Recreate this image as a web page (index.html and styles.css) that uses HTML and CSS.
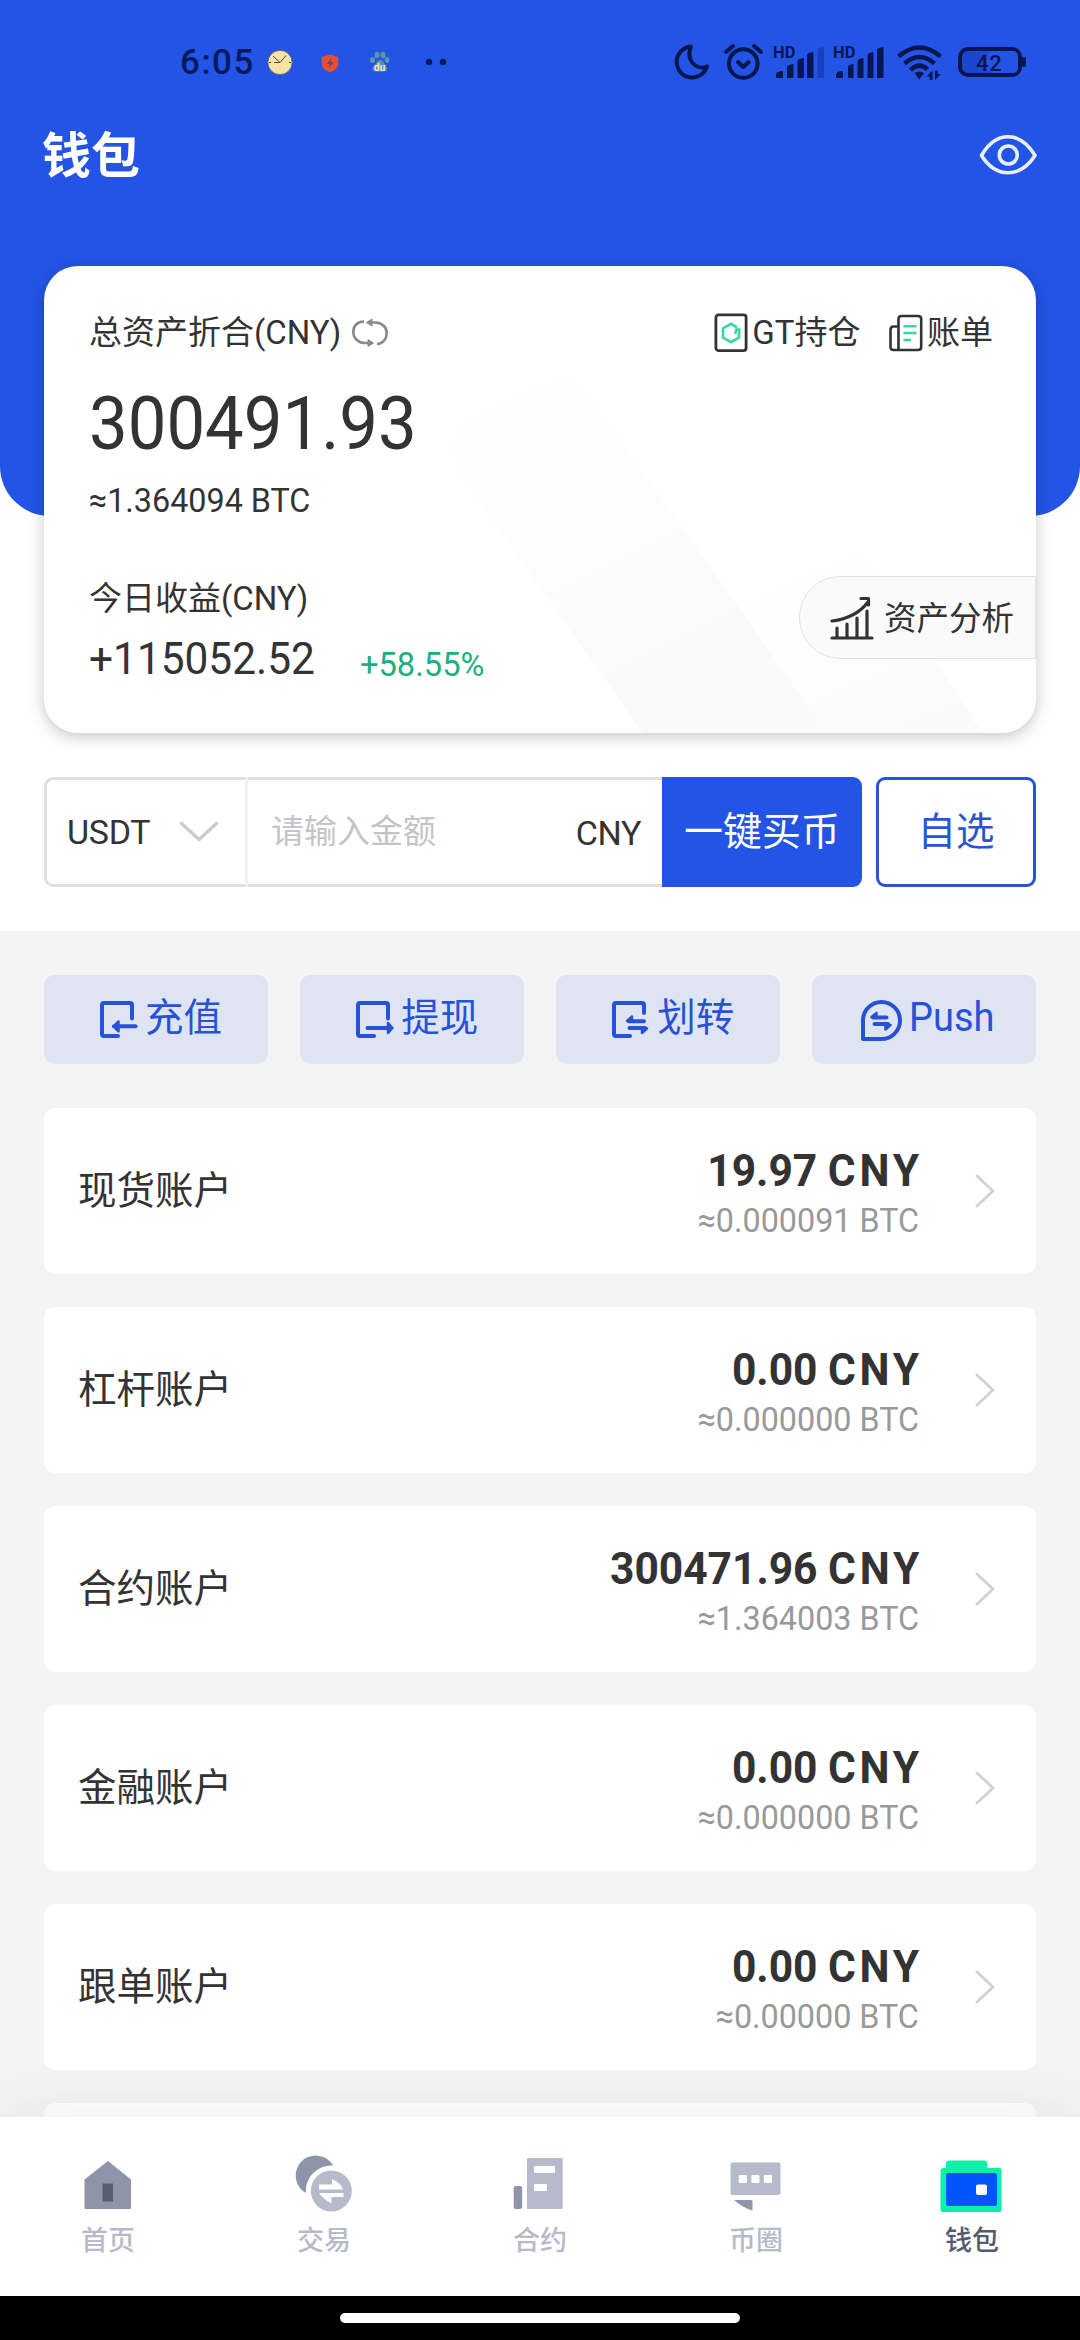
FILE: index.html
```html
<!DOCTYPE html>
<html lang="zh-CN">
<head>
<meta charset="utf-8">
<title>钱包</title>
<link rel="stylesheet" href="styles.css">
</head>
<body>
<div class="screen">
  <header class="hero">
    <div class="status">
      <div class="status-left">
        <span class="time">6:05</span>
        <svg class="notif" width="190" height="36" viewBox="0 0 190 36">
          <circle cx="20" cy="18.500" r="12.200" fill="#f8e3a6" stroke="#5a5e80" stroke-width="1"/>
          <path d="M13 12l7 6.500 6-7" fill="none" stroke="#4a4a50" stroke-width="1"/>
          <path d="M20 18.500h-6M9 18.500h2M29 18.500h2" fill="none" stroke="#4a4a50" stroke-width="1"/>
          <path d="M70 10.500l8.300 2.500v7c0 4-4 7-8.300 8.500-4.300-1.500-8.300-4.500-8.300-8.500v-7z" fill="#e5502f"/>
          <path d="M71.500 14l-5 6h3.300l-1 4 5-6h-3.300z" fill="#5a4a8c"/>
          <g fill="#5d94a8">
            <ellipse cx="112.500" cy="16" rx="2.500" ry="3"/><ellipse cx="117" cy="11" rx="2.500" ry="3.200"/>
            <ellipse cx="123" cy="11" rx="2.500" ry="3.200"/><ellipse cx="127" cy="16" rx="2.300" ry="3"/>
            <path d="M120 16c3 0 3.500 3 5.500 5s2.500 6.500-1.500 6.500h-8c-4.500 0-4-4.500-1.500-6.500s2.500-5 5.500-5z"/>
          </g>
          <text x="114" y="27" class="paw-text">du</text>
          <circle cx="169" cy="18" r="3.200" fill="#061a5e"/><circle cx="183" cy="18" r="3.200" fill="#061a5e"/>
        </svg>
      </div>
      <svg class="sys" width="360" height="44" viewBox="0 0 360 44">
        <g fill="none" stroke="#06174f" stroke-width="4" stroke-linecap="round" stroke-linejoin="round">
          <path d="M21 6.500A15.500 15.500 0 1 0 37 26.500C26 31 15.500 20 21 6.500z"/>
          <circle cx="73.300" cy="23.500" r="14.300"/>
          <path d="M68 22l5.300 5 5.300-5"/>
          <path d="M56 12l7-6M91 12l-7-6"/>
        </g>
        <g class="hd"><text x="103" y="18">HD</text><text x="163" y="18">HD</text></g>
        <g fill="#06174f">
          <path d="M106 38v-3q0-4 7-4v7zM117 38V27q0-2 6.500-3v14zM127.500 38V21q0-2 6.500-3v20zM137 38V15q0-2 6.500-3v26z"/>
          <path d="M147.500 38V10q0-2 6.500-3v31z" fill="#1a41bd"/>
          <path d="M166 38v-3q0-4 7-4v7zM178 38V27q0-2 5.500-3v14zM187.500 38V21q0-2 6-3v20zM197.500 38V15q0-2 6-3v26zM207 38V10q0-2 6.500-3v31z"/>
          <path d="M244.500 33q5-3 9.500 0l-4.700 6.500z"/>
          <path d="M262.500 30.500v9.500h-2.700v-3.500h-3.300zM265 40v-9.500h2.700v3.500h3.300z"/>
        </g>
        <g fill="none" stroke="#06174f" stroke-width="4.500">
          <path d="M228.500 16.500q21-18 42 0M234.500 23.500q15-13 30 0M240.500 30q9-8.500 17 -.500"/>
        </g>
        <rect x="290" y="9" width="60" height="26" rx="8" fill="#1b46cd" stroke="#06174f" stroke-width="4"/>
        <rect x="317" y="11" width="31" height="22" rx="5" fill="#2354e6"/>
        <rect x="352" y="17" width="4" height="10" rx="2" fill="#06174f"/>
        <text x="306" y="30.500" class="batt">42</text>
      </svg>
    </div>
    <div class="titlebar">
      <h1>钱包</h1>
      <svg width="58" height="40" viewBox="0 0 58 40" fill="none" stroke="#e6f0ff" stroke-width="3.600" stroke-linejoin="round">
        <path d="M2.500 20.500C17-4.500 41-4.500 56 20.500C41 43.500 17 43.500 2.500 20.500z"/>
        <circle cx="29.300" cy="20" r="9"/>
      </svg>
    </div>
  </header>

  <section class="card">
    <svg class="bands" width="992" height="467" viewBox="0 0 992 467">
      <defs>
        <linearGradient id="b1" x1="0.200" y1="0" x2="0.600" y2="0.800">
          <stop offset="0" stop-color="#fafafa" stop-opacity="0"/><stop offset="1" stop-color="#fafafa"/>
        </linearGradient>
        <linearGradient id="b2" x1="0.200" y1="0" x2="0.800" y2="1">
          <stop offset="0.300" stop-color="#fafafa" stop-opacity="0"/><stop offset="1" stop-color="#fafafa"/>
        </linearGradient>
      </defs>
      <path d="M599 467L415 206Q398 170 430 140T530 110L784 467z" fill="url(#b1)"/>
      <path d="M784 467L630 240H790L938 467z" fill="url(#b2)"/>
    </svg>
    <div class="card-head">
      <div class="label">总资产折合(CNY)
        <svg width="36" height="30" viewBox="0 0 36 30" fill="none" stroke="#8a8a8a" stroke-width="2.600">
          <path d="M12 3.500C5 3.500 1.300 8 1.300 14S6 25 13 25h5M25 26c6-.5 9.700-5 9.700-11S30 4.500 23 4.500h-4"/>
          <path d="M20 1v7l-5.500-3.500zM16 21.500v7l5.500-3.500z" fill="#8a8a8a" stroke-width="1"/>
        </svg>
      </div>
      <div class="links">
        <span class="link">
          <svg width="34" height="40" viewBox="0 0 34 40" fill="none" stroke="#333" stroke-width="2.800">
            <rect x="1.900" y="1.900" width="30.200" height="35.700" rx="2.500"/>
            <path d="M25 17.500v7l-8 4.700-8-4.700v-9l8-4.700 6 3.500M26.500 16.500h-4l-1.500 4.500" stroke="#35d89e" stroke-width="2.600"/>
          </svg>GT持仓</span>
        <span class="link">
          <svg width="34" height="38" viewBox="0 0 34 38" fill="none" stroke="#333" stroke-width="2.600">
            <path d="M9.500 36V5q0-3 3-3H29q3.200 0 3.200 3v28q0 3-3.200 3H4.500q-3 0-3-3V16q0-3.500 3-3.500h5"/>
            <path d="M14.500 12.200h13M14.500 19h13M14.500 26h7.500" stroke="#35d89e" stroke-width="2.500"/>
          </svg>账单</span>
      </div>
    </div>
    <div class="total"><span class="num">300491.93</span></div>
    <div class="btc"><span class="num">≈1.364094 BTC</span></div>
    <div class="label today">今日收益(CNY)</div>
    <div class="profit"><span class="gain num">+115052.52</span><span class="rate num">+58.55%</span></div>
    <div class="analysis">
      <svg width="44" height="44" viewBox="0 0 44 44" fill="none" stroke="#333" stroke-width="3.200" stroke-linecap="round" stroke-linejoin="round">
        <path d="M2 25q24-3 36-19M31 2.500h7.500v6.500M2 42h40M7 41v-9M17 41V28M27 41V22M37 41V15"/>
      </svg><span>资产分析</span></div>
  </section>

  <section class="buy">
    <div class="field">
      <div class="coin"><span class="latin">USDT</span>
        <svg width="40" height="22" viewBox="0 0 40 22" fill="none" stroke="#ccc" stroke-width="3.600" stroke-linecap="round" stroke-linejoin="round"><path d="M2.500 2.500L20 18.500 37.500 2.500"/></svg>
      </div>
      <div class="amount"><span class="hint">请输入金额</span><span class="latin cny">CNY</span></div>
      <div class="go">一键买币</div>
    </div>
    <div class="fav">自选</div>
  </section>

  <main class="body">
    <div class="actions">
      <div class="action">
        <svg width="40" height="40" viewBox="0 0 40 40" fill="none" stroke="#2852d6" stroke-width="4" stroke-linecap="round" stroke-linejoin="round"><path d="M33 18.500V5q0-2-2-2H5Q3 3 3 5v29q0 2 2 2h14"/><path d="M15 26.300h21.500"/><path d="M19.500 21.500l-5 4.800 5 5z" fill="#2852d6" stroke-width="2.500"/></svg>
        <span>充值</span></div>
      <div class="action">
        <svg width="40" height="40" viewBox="0 0 40 40" fill="none" stroke="#2852d6" stroke-width="4" stroke-linecap="round" stroke-linejoin="round"><path d="M33 18.500V5q0-2-2-2H5Q3 3 3 5v29q0 2 2 2h14"/><path d="M12.500 28H34"/><path d="M33 23l4.500 5-4.500 5z" fill="#2852d6" stroke-width="2.500"/></svg>
        <span>提现</span></div>
      <div class="action">
        <svg width="40" height="40" viewBox="0 0 40 40" fill="none" stroke="#2852d6" stroke-width="4" stroke-linecap="round" stroke-linejoin="round"><path d="M33 13V5q0-2-2-2H5Q3 3 3 5v29q0 2 2 2h14"/><path d="M18 21.300h15M18.500 28H34"/><path d="M16 21l5-4.500V21zM36 28.500L31 33v-4.500z" fill="#2852d6" stroke-width="2.500"/></svg>
        <span>划转</span></div>
      <div class="action push">
        <svg width="42" height="42" viewBox="0 0 42 42" fill="none" stroke="#2852d6" stroke-width="4" stroke-linecap="round" stroke-linejoin="round"><path d="M3 40V21.500A18.500 18.500 0 1 1 21.500 40z"/><path d="M13 18.500h13.500M14.500 25H28"/><path d="M11.500 18l5-4v4zM30.500 26l-5 4.500V26z" fill="#2852d6" stroke-width="2.500"/></svg>
        <span class="num">Push</span></div>
    </div>

    <div class="accounts">
      <div class="account"><span class="name">现货账户</span><div class="vals"><b class="num">19.97 <span class="cur">CNY</span></b><i class="num">≈0.000091 BTC</i></div><svg class="arrow" width="20" height="34" viewBox="0 0 20 34"><path d="M2 2L18 17 2 32"/></svg></div>
      <div class="account"><span class="name">杠杆账户</span><div class="vals"><b class="num">0.00 <span class="cur">CNY</span></b><i class="num">≈0.000000 BTC</i></div><svg class="arrow" width="20" height="34" viewBox="0 0 20 34"><path d="M2 2L18 17 2 32"/></svg></div>
      <div class="account"><span class="name">合约账户</span><div class="vals"><b class="num">300471.96 <span class="cur">CNY</span></b><i class="num">≈1.364003 BTC</i></div><svg class="arrow" width="20" height="34" viewBox="0 0 20 34"><path d="M2 2L18 17 2 32"/></svg></div>
      <div class="account"><span class="name">金融账户</span><div class="vals"><b class="num">0.00 <span class="cur">CNY</span></b><i class="num">≈0.000000 BTC</i></div><svg class="arrow" width="20" height="34" viewBox="0 0 20 34"><path d="M2 2L18 17 2 32"/></svg></div>
      <div class="account"><span class="name">跟单账户</span><div class="vals"><b class="num">0.00 <span class="cur">CNY</span></b><i class="num">≈0.00000 BTC</i></div><svg class="arrow" width="20" height="34" viewBox="0 0 20 34"><path d="M2 2L18 17 2 32"/></svg></div>
      <div class="account"></div>
    </div>
  </main>

  <nav class="tabs">
    <div class="tab"><svg width="70" height="70" viewBox="0 0 70 70"><path d="M35 11L58 29.500V58q0 1-1 1H12.500q-1 0-1-1V29.500z" fill="#8e94a9"/><path d="M29.500 33.500h10.500v18H29.500z" fill="#585d72"/></svg>首页</div>
    <div class="tab"><svg width="70" height="70" viewBox="0 0 70 70"><circle cx="26.700" cy="25.500" r="20" fill="#8e94a9"/><circle cx="42.300" cy="41" r="25.500" fill="#fff"/><circle cx="42.300" cy="41" r="20.500" fill="#b5bbcb"/><path d="M30 34.500h13V29q9 4 11 10.500H30zM30 43h24.500v4H42.500v6.500Q34 49 30 43z" fill="#fff"/></svg>交易</div>
    <div class="tab"><svg width="70" height="70" viewBox="0 0 70 70"><rect x="8.700" y="36" width="8.500" height="23" rx="2" fill="#8e94a9"/><rect x="22" y="8" width="35.700" height="51" rx="1" fill="#b5bbcb"/><g fill="#fff"><rect x="29" y="16" width="21" height="7" rx="1"/><rect x="29" y="34" width="13" height="7" rx="1"/></g></svg>合约</div>
    <div class="tab"><svg width="70" height="70" viewBox="0 0 70 70"><rect x="9.500" y="12.500" width="50" height="32.500" rx="2" fill="#b5bbcb"/><g fill="#fff"><rect x="17.800" y="25" width="8.200" height="8" rx="1"/><rect x="30.300" y="25" width="8.200" height="8" rx="1"/><rect x="42.800" y="25" width="8.200" height="8" rx="1"/></g><path d="M13 50h17q1.500 0 1.500 1.500V60.500Q21 57.500 13 50z" fill="#9096a9"/></svg>币圈</div>
    <div class="tab active"><svg width="70" height="70" viewBox="0 0 70 70"><path d="M9 18v-4.500q0-3 3-3h35q3 0 3 3V18h13q1.500 0 1.500 1.500V60q0 2-1.500 2H5.500q-2 0-2-2V21q0-3 3-3z" fill="#0cf0a8"/><rect x="9" y="23" width="51" height="33" rx="2" fill="#0054ff"/><rect x="39" y="34.500" width="11" height="10.500" rx="2" fill="#fff"/></svg>钱包</div>
  </nav>
  <div class="gesture"><div class="pill"></div></div>
</div>
</body>
</html>
```
FILE: styles.css
```css
* { box-sizing: border-box; }
body {
  margin: 0;
  font-family: Roboto, "Noto Sans CJK SC", sans-serif;
  color: #333;
}
.screen {
  width: 1080px;
  height: 2340px;
  overflow: hidden;
  display: flex;
  flex-direction: column;
  background: #fff;
}
.num { display: inline-block; transform: scaleX(.95); transform-origin: left center; white-space: pre; }

/* header */
.hero {
  flex: none;
  height: 516px;
  background: #2354e6;
  border-radius: 0 0 50px 50px;
}
.status {
  height: 100px;
  padding: 40px 50px 0 180px;
  display: flex;
  justify-content: space-between;
}
.status-left { display: flex; padding-top: 4px; height: 40px; }
.time { width: 80px; font-size: 35px; line-height: 38px; font-weight: 500; color: #061a5e; letter-spacing: 1.5px; }
.paw-text { font: 700 10px Roboto, sans-serif; fill: #f0efc0; }
.hd { font: 700 16.500px Roboto, sans-serif; fill: #06174f; }
.batt { font: 500 22px Roboto, sans-serif; fill: #06174f; letter-spacing: .8px; }
.titlebar {
  height: 110px;
  padding: 0 43px 0 42px;
  display: flex;
  justify-content: space-between;
  align-items: center;
}
.titlebar h1 { margin: 3px 0 0; font-size: 49px; line-height: 60px; font-weight: 700; color: #fff; }

/* balance card */
.card {
  position: relative;
  flex: none;
  height: 467px;
  margin: -250px 44px 0;
  padding: 47px 43px 0 45px;
  background: #fff;
  border-radius: 34px;
  box-shadow: 0 4px 16px rgba(0, 0, 0, .22);
}
.bands { position: absolute; left: 0; top: 0; border-radius: 34px; }
.card > div { position: relative; }
.card-head { display: flex; justify-content: space-between; height: 40px; }
.label { display: flex; align-items: center; gap: 11px; font-size: 33px; line-height: 40px; }
.links { display: flex; gap: 28px; }
.link { display: flex; align-items: center; gap: 4.500px; font-size: 33px; line-height: 40px; }
.total { margin-top: 30px; font-size: 75px; line-height: 80px; height: 80px; }
.total .num { transform: scaleX(.918); }
.btc { margin-top: 17px; font-size: 34px; line-height: 40px; height: 40px; }
.today { margin-top: 59px; }
.profit { margin-top: 15px; display: flex; height: 50px; }
.gain { width: 271px; font-size: 45px; line-height: 50px; transform: scaleX(.942); }
.rate { margin-top: 10px; font-size: 34px; line-height: 40px; color: #1cb07e; transform: scaleX(.96); }
.card > .analysis {
  position: absolute;
  right: 0;
  top: 310px;
  width: 237px;
  height: 83px;
  padding-left: 30px;
  display: flex;
  align-items: center;
  gap: 10px;
  border: 1px solid #e2e2e2;
  border-radius: 41px 0 0 41px;
  background: #fafafa;
  font-size: 32.500px;
}
.analysis span { margin-top: -4px; }

/* quick buy */
.buy { flex: none; display: flex; gap: 14px; margin: 44px 44px; height: 110px; line-height: 50px; }
.field { flex: 1; display: flex; }
.coin {
  width: 204px;
  padding-left: 20px;
  display: flex;
  align-items: center;
  gap: 26px;
  border: 3px solid #e0e0e0;
  border-right-color: #f0f0f0;
  border-radius: 9px 0 0 9px;
}
.latin { font-size: 34px; display: inline-block; }
.coin .latin { width: 86px; letter-spacing: -.3px; }
.amount {
  flex: 1;
  padding: 0 21px 0 23px;
  display: flex;
  justify-content: space-between;
  align-items: center;
  border: solid #e0e0e0;
  border-width: 3px 0;
}
.hint { font-size: 33px; color: #c4c4c8; }
.cny { padding-top: 2px; letter-spacing: -.4px; }
.go {
  width: 200px;
  display: flex;
  align-items: center;
  justify-content: center;
  border-radius: 0 9px 9px 0;
  background: #2354e6;
  color: #fff;
  font-size: 39px;
}
.fav {
  width: 160px;
  display: flex;
  align-items: center;
  justify-content: center;
  border: 3px solid #2b55cf;
  border-radius: 9px;
  color: #2b55cf;
  font-size: 38.500px;
}

/* lists */
.body { flex: 1; min-height: 0; overflow: hidden; background: #f4f4f4; padding: 44px 44px 0; }
.actions { display: grid; grid-template-columns: repeat(4, 1fr); gap: 32.500px; }
.action {
  height: 89px;
  padding-left: 55px;
  display: flex;
  align-items: center;
  gap: 6px;
  border-radius: 11px;
  background: #dfe4f2;
  color: #2852d6;
  font-size: 38.500px;
  line-height: 50px;
}
.action span { margin-top: -4px; }
.push { padding-left: 48px; gap: 7px; font-size: 40px; }
.push .num { margin-top: -3px; }
.accounts { margin-top: 44px; display: flex; flex-direction: column; gap: 33px; }
.account {
  flex: none;
  height: 166px;
  padding: 0 41px 0 34px;
  display: flex;
  align-items: center;
  border-radius: 11px;
  background: #fff;
}
.name { font-size: 38.500px; line-height: 56px; margin-top: -1px; }
.vals { margin: 3px 0 0 auto; display: flex; flex-direction: column; align-items: flex-end; gap: 4px; }
.vals .num { transform-origin: right center; }
.vals b { font-size: 45px; line-height: 50px; font-weight: 700; transform: scaleX(.945); }
.vals i { font-size: 34px; line-height: 40px; font-style: normal; color: #999; }
.cur { letter-spacing: 4px; margin-right: -4px; }
.arrow { margin-left: 56px; fill: none; stroke: #d2d2d2; stroke-width: 2.800; stroke-linecap: round; }

/* bottom */
.tabs {
  position: relative;
  flex: none;
  height: 179px;
  padding-top: 33px;
  display: grid;
  grid-template-columns: repeat(5, 1fr);
  background: #fff;
  box-shadow: 0 -4px 60px rgba(40, 50, 100, .09);
}
.tab { display: flex; flex-direction: column; align-items: center; gap: 1px; font-size: 27px; line-height: 40px; font-weight: 500; color: #b6bac9; }
.active { color: #555a6f; }
.gesture { position: relative; flex: none; height: 44px; padding-top: 17px; background: #000; }
.pill { width: 400px; height: 10px; margin: 0 auto; border-radius: 5px; background: #fff; }
```
